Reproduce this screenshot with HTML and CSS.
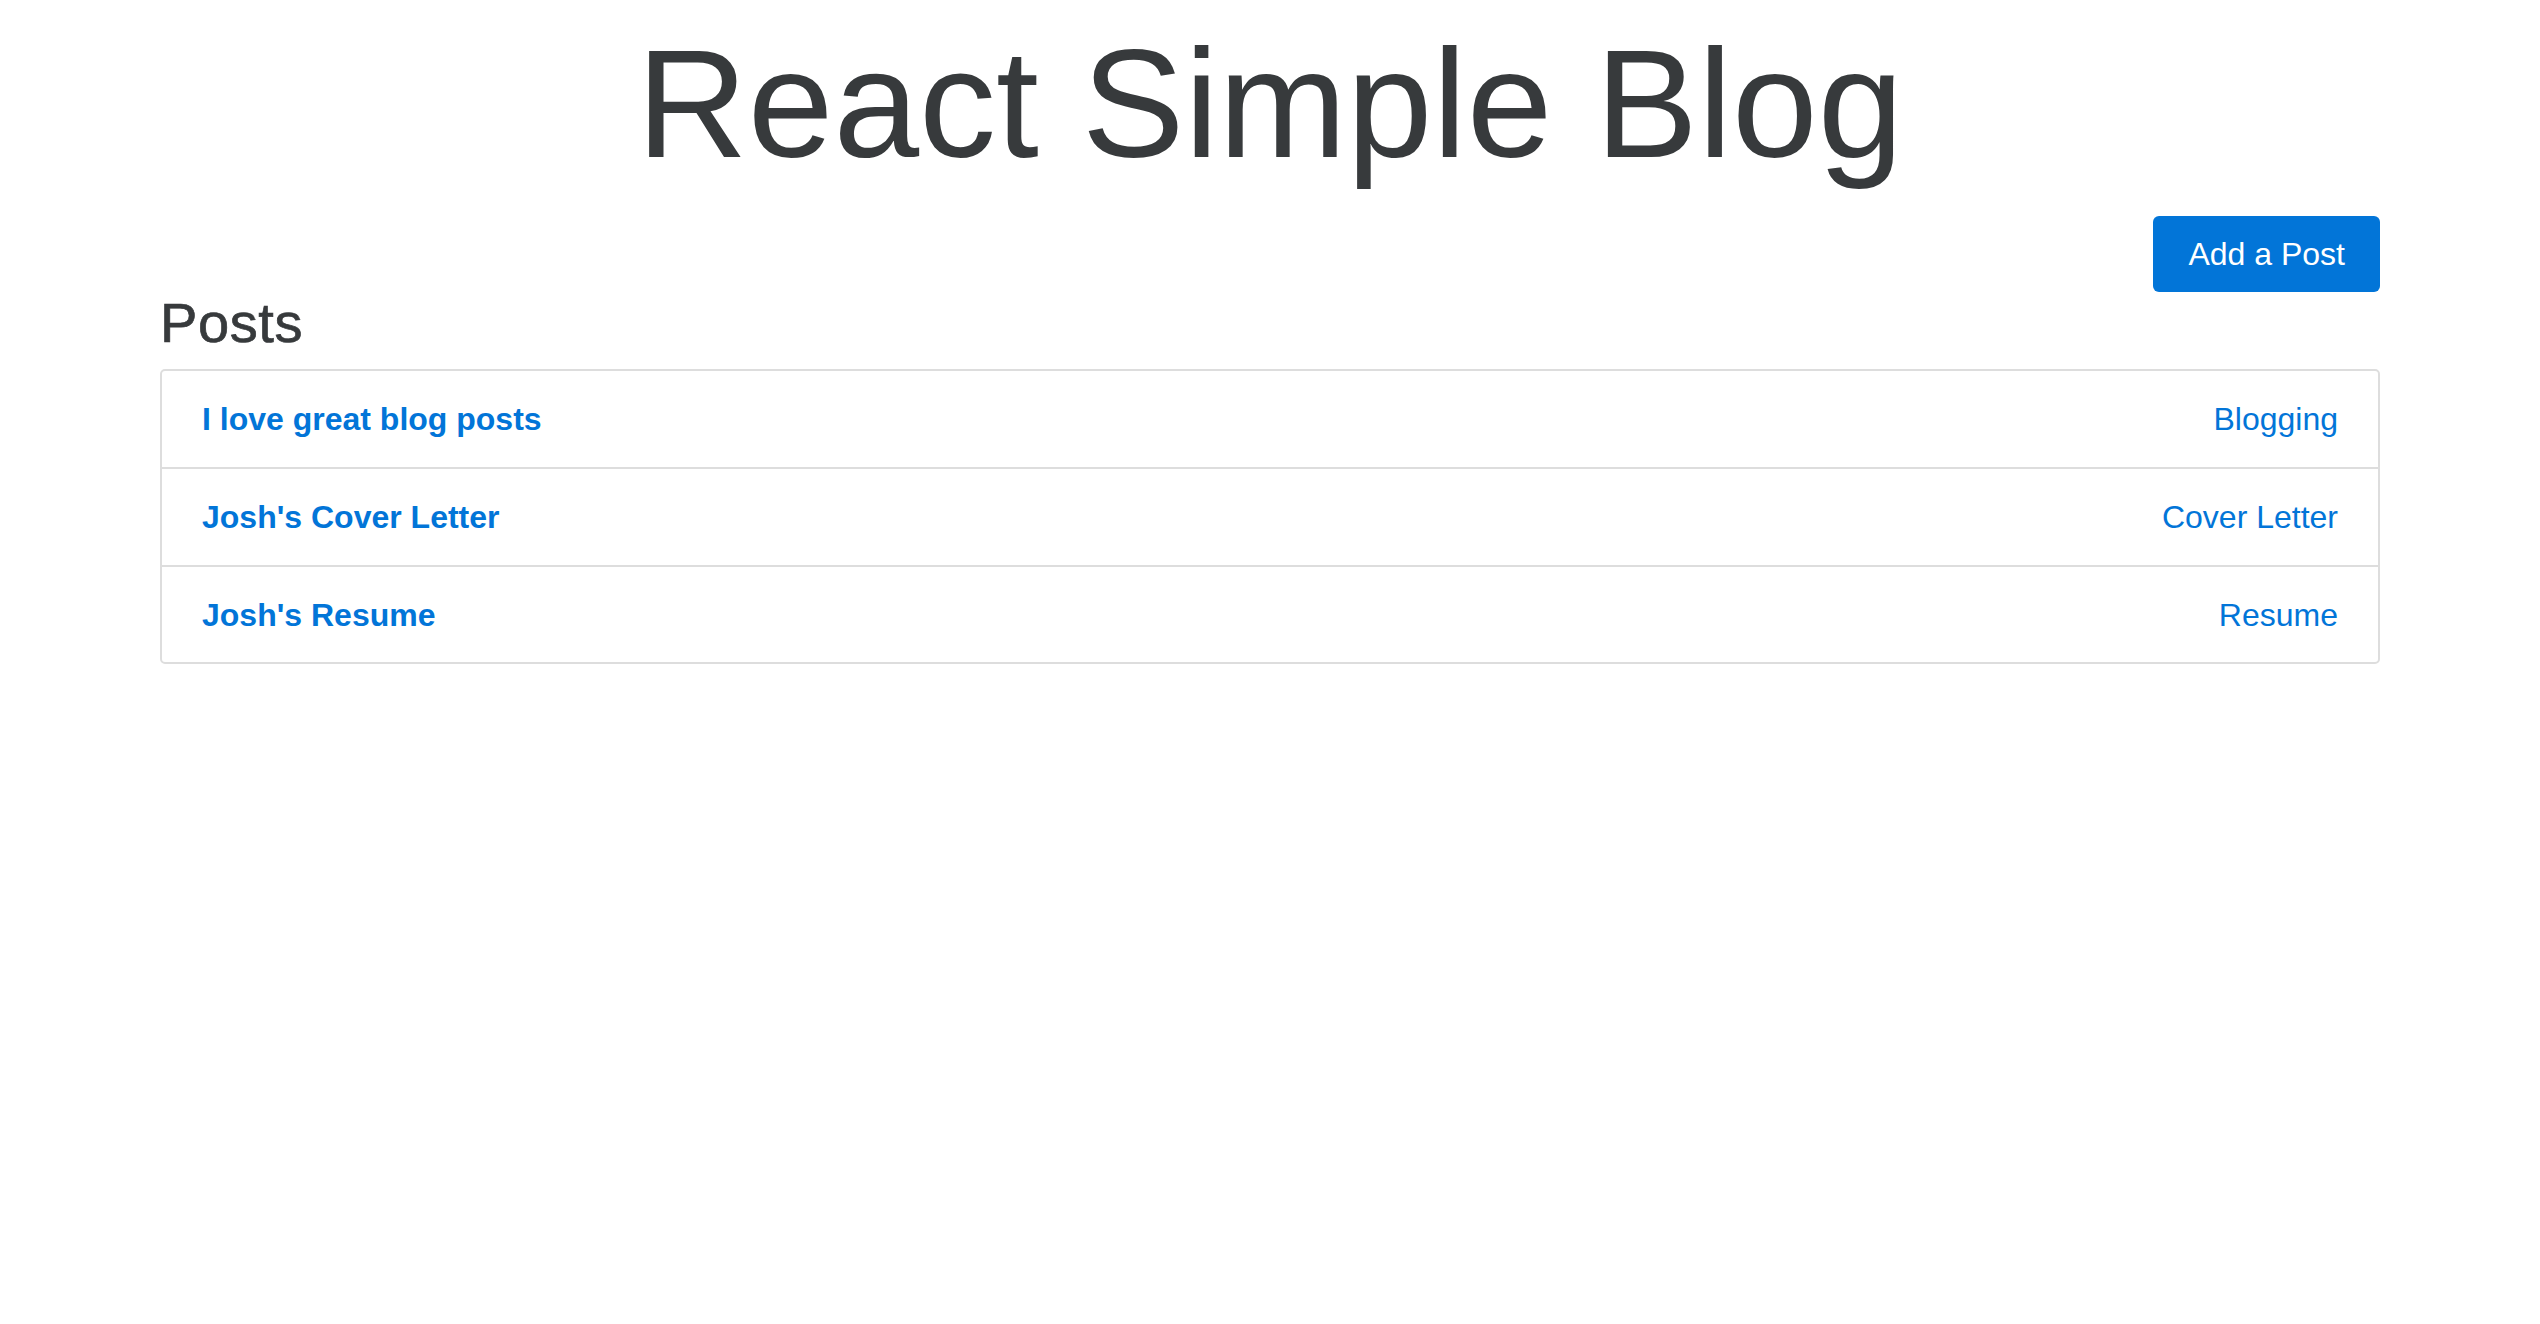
FILE: index.html
```html
<!DOCTYPE html>
<html lang="en">
<head>
<meta charset="utf-8">
<title>React Simple Blog</title>
<link rel="stylesheet" href="styles.css">
</head>
<body>
<div class="container">
  <h1 class="site-title">React Simple Blog</h1>
  <div class="actions">
    <a class="btn-primary" href="#">Add a Post</a>
  </div>
  <h3 class="section-title">Posts</h3>
  <ul class="post-list">
    <li class="post-item">
      <a class="post-title" href="#">I love great blog posts</a>
      <a class="post-category" href="#">Blogging</a>
    </li>
    <li class="post-item">
      <a class="post-title" href="#">Josh's Cover Letter</a>
      <a class="post-category" href="#">Cover Letter</a>
    </li>
    <li class="post-item">
      <a class="post-title" href="#">Josh's Resume</a>
      <a class="post-category" href="#">Resume</a>
    </li>
  </ul>
</div>
</body>
</html>
```

FILE: styles.css
```css
* {
  box-sizing: border-box;
}

html, body {
  margin: 0;
  padding: 0;
  background: #ffffff;
}

body {
  font-family: "Liberation Sans", Arial, Helvetica, sans-serif;
  color: #373a3c;
}

.container {
  margin: 0 160px;
  display: flex;
  flex-direction: column;
}

.site-title {
  margin: 20px 0 0;
  font-size: 154px;
  line-height: 169px;
  font-weight: 400;
  text-align: center;
  color: #373a3c;
}

.actions {
  margin-top: 27px;
  display: flex;
  justify-content: flex-end;
}

.btn-primary {
  display: inline-block;
  background: #0275d8;
  color: #ffffff;
  font-size: 32px;
  line-height: 48px;
  padding: 14px 35px;
  border-radius: 6px;
  text-decoration: none;
}

.section-title {
  margin: 0 0 15px;
  font-size: 56px;
  line-height: 62px;
  font-weight: 400;
  letter-spacing: 0.6px;
  -webkit-text-stroke: 0.7px #373a3c;
  color: #373a3c;
}

.post-list {
  list-style: none;
  margin: 0;
  padding: 0;
  border: 2px solid #dddddd;
  border-radius: 5px;
}

.post-item {
  display: flex;
  justify-content: space-between;
  align-items: center;
  padding: 29px 40px;
  font-size: 32px;
  line-height: 38px;
  border-top: 2px solid #dddddd;
}

.post-item:first-child {
  border-top: none;
}

.post-item:last-child {
  padding-bottom: 28px;
}

.post-title {
  color: #0275d8;
  font-weight: 700;
  text-decoration: none;
}

.post-category {
  color: #0275d8;
  text-decoration: none;
}
```
